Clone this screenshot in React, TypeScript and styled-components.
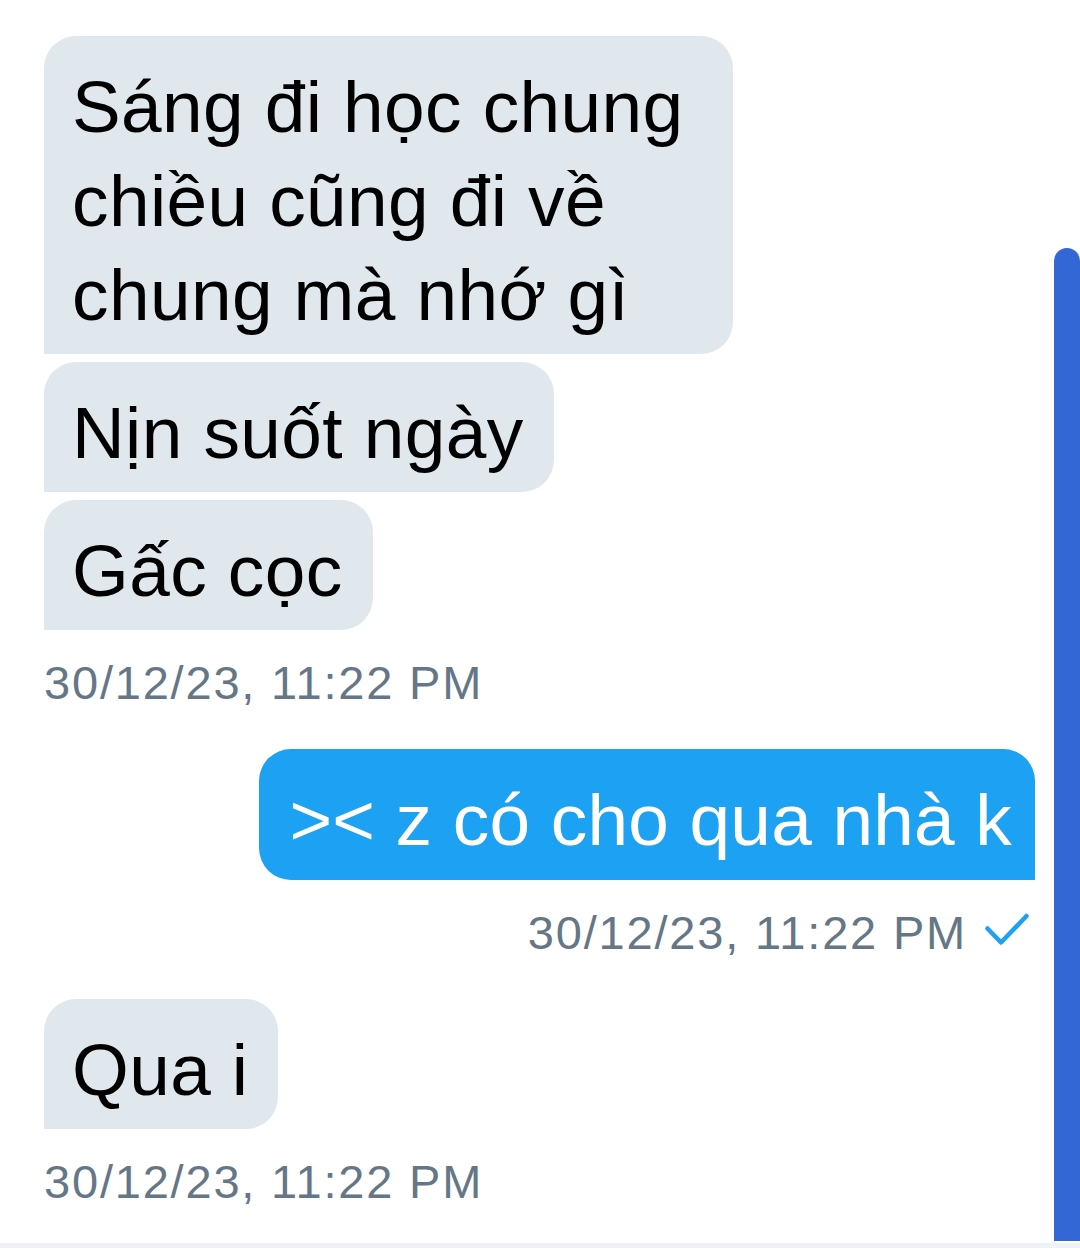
import React from "react";
import styled, { createGlobalStyle } from "styled-components";

const GlobalStyle = createGlobalStyle`
  html, body {
    margin: 0;
    padding: 0;
    background: #ffffff;
  }
  * { box-sizing: border-box; }
`;

const Screen = styled.div`
  position: relative;
  width: 1080px;
  height: 1248px;
  overflow: hidden;
  background: #ffffff;
  font-family: "Liberation Sans", Arial, sans-serif;
`;

const Thread = styled.div`
  display: flex;
  flex-direction: column;
  padding: 36px 45px 0 44px;
`;

const Group = styled.div<{ $out?: boolean }>`
  display: flex;
  flex-direction: column;
  align-items: ${(p) => (p.$out ? "flex-end" : "flex-start")};
  gap: 8px;
  & + & {
    margin-top: 38px;
  }
`;

const Bubble = styled.div<{ $out?: boolean }>`
  width: fit-content;
  max-width: ${(p) => (p.$out ? "840px" : "689px")};
  padding: ${(p) => (p.$out ? "24px 23px 13px 30px" : "24px 30px 12px 28px")};
  font-size: 73px;
  line-height: 94px;
  letter-spacing: ${(p) => (p.$out ? "0.2px" : "0.4px")};
  color: ${(p) => (p.$out ? "#ffffff" : "#000000")};
  background: ${(p) => (p.$out ? "#1da1f2" : "#e1e8ed")};
  border-radius: ${(p) => (p.$out ? "32px 32px 0 32px" : "32px 32px 32px 0")};
  white-space: pre-wrap;
`;

const Meta = styled.div`
  display: flex;
  align-items: center;
  margin-top: 17px;
  font-size: 47px;
  line-height: 56px;
  letter-spacing: 1.8px;
  color: #657786;
`;

const OutMeta = styled(Meta)`
  padding-right: 6px;
`;

const Check = styled.svg`
  width: 44px;
  height: 34px;
  margin-left: 18px;
  margin-top: -6px;
`;

const ScrollThumb = styled.div`
  position: absolute;
  right: 0;
  top: 248px;
  width: 26px;
  height: 993px;
  background: #3367d6;
  border-radius: 13px 13px 0 0;
`;

const BottomEdge = styled.div`
  position: absolute;
  left: 0;
  right: 0;
  bottom: 0;
  height: 5px;
  background: #eef2f6;
`;

const stamp = "30/12/23, 11:22 PM";

export default function App() {
  return (
    <>
      <GlobalStyle />
      <Screen>
        <Thread>
          <Group>
            <Bubble>Sáng đi học chung chiều cũng đi về chung mà nhớ gì</Bubble>
            <Bubble>Nịn suốt ngày</Bubble>
            <Bubble>Gấc cọc</Bubble>
            <Meta>{stamp}</Meta>
          </Group>
          <Group $out>
            <Bubble $out>{"><"} z có cho qua nhà k</Bubble>
            <OutMeta>
              {stamp}
              <Check viewBox="0 0 44 34" fill="none">
                <path
                  d="M2.5 15.5 L16 29.5 L41.5 3"
                  stroke="#1da1f2"
                  strokeWidth="4.5"
                  strokeLinecap="round"
                  strokeLinejoin="round"
                />
              </Check>
            </OutMeta>
          </Group>
          <Group>
            <Bubble>Qua i</Bubble>
            <Meta>{stamp}</Meta>
          </Group>
        </Thread>
        <ScrollThumb />
        <BottomEdge />
      </Screen>
    </>
  );
}
